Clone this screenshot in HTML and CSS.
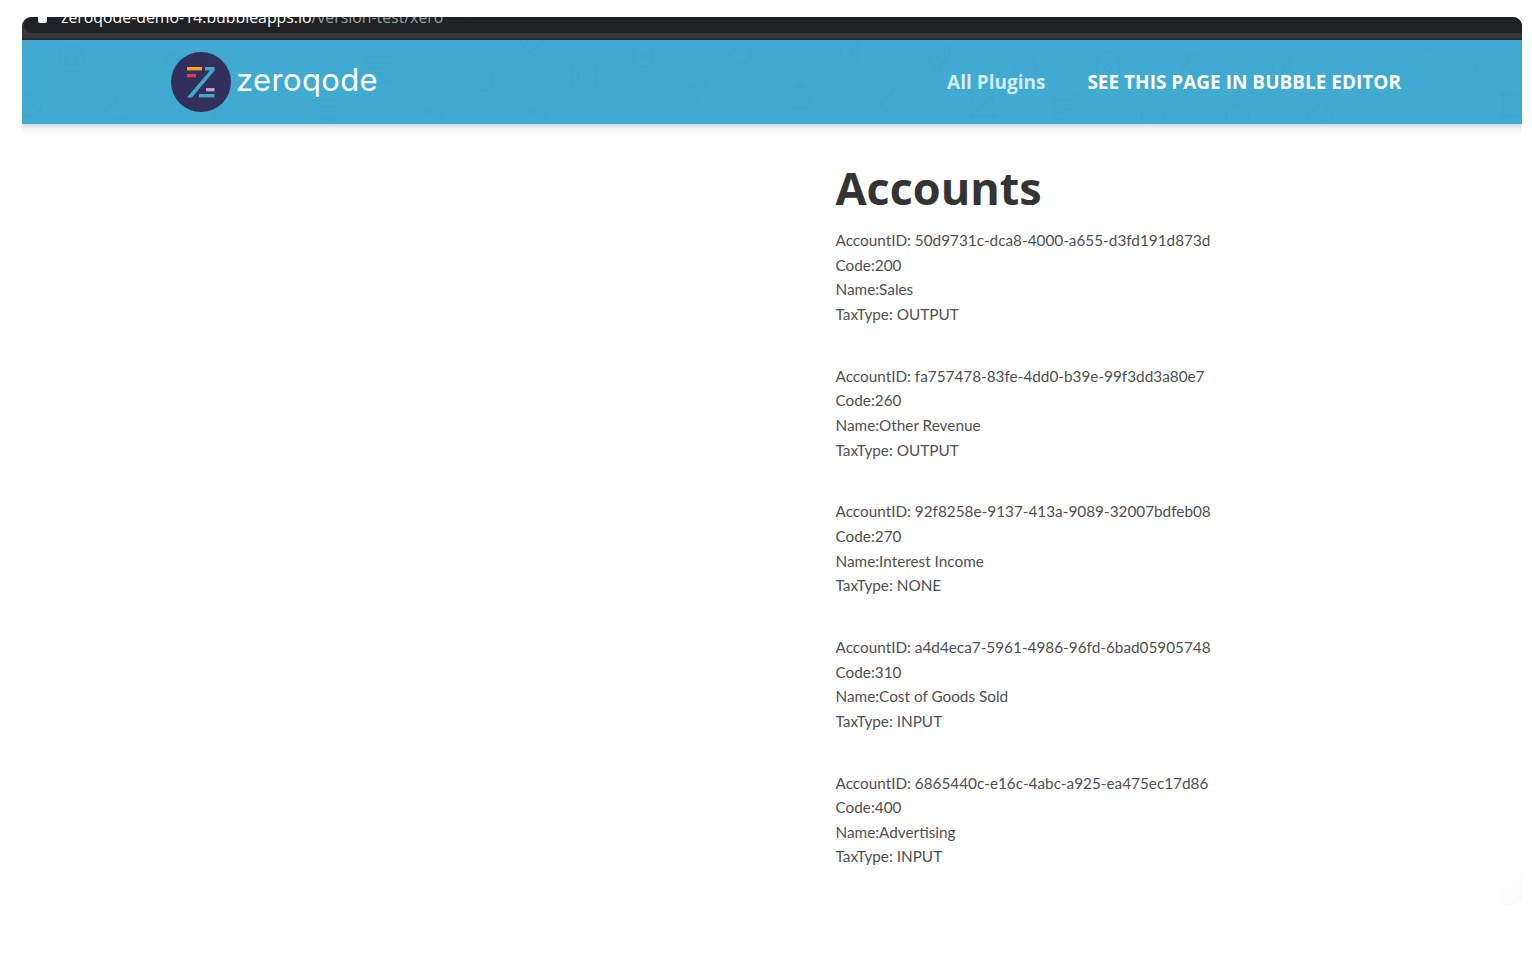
FILE: index.html
```html
<!DOCTYPE html>
<html lang="en">
<head>
  <meta charset="UTF-8" />
  <meta name="viewport" content="width=device-width, initial-scale=1.0"/>
  <title>Accounts - zeroqode</title>
  <link rel="stylesheet" href="styles.css">
</head>
<body>
  <div class="window">
    <div class="browser-bar">
      <div class="url-field">
        <span class="lock"></span>
        <span class="url">zeroqode-demo-14.bubbleapps.io<span class="url-path">/version-test/xero</span></span>
      </div>
    </div>

    <header class="header">
      <!-- faint icon wallpaper, coordinates are the header's own -->
      <svg class="pattern" width="1500" height="84" viewBox="0 0 1500 84" aria-hidden="true">
        <defs>
          <symbol id="i-insta" viewBox="0 0 26 26" overflow="visible">
            <rect x="1" y="1" width="24" height="24" rx="4"/><circle cx="13" cy="13" r="6"/><path d="M18 1v6h7"/>
          </symbol>
          <symbol id="i-watch" viewBox="0 0 30 28" overflow="visible">
            <circle cx="18" cy="16" r="11"/><circle cx="18" cy="16" r="2.5"/><path d="M15 2h6M18 2v3M1 10h6M0 16h5M1 22h6"/>
          </symbol>
          <symbol id="i-puzzle" viewBox="0 0 26 26" overflow="visible">
            <path d="M7 8h5c-2-2-2-7 3-7s5 5 3 7h6v16H7v-5c-2 2-6 2-6-3s4-5 6-3z"/>
          </symbol>
          <symbol id="i-rocket" viewBox="0 0 28 28" overflow="visible">
            <path d="M27 1c-8 0-14 4-17 9l-4 7 5 5 7-4c5-3 9-9 9-17z"/><circle cx="18" cy="10" r="4"/><path d="M7 10H3L1 14l5 3M18 21v4l-4 2-3-5"/>
          </symbol>
          <symbol id="i-thumb" viewBox="0 0 28 26" overflow="visible">
            <path d="M3 12c3-1 6-4 8-9 2-1 3 1 2 5h10c3 1 3 4 1 5 1 2 1 4-1 5 0 2-1 3-2 4H9c-4 0-7-2-7-6z"/><path d="M18 1l2 4M24 2l-2 4"/>
          </symbol>
          <symbol id="i-browser" viewBox="0 0 28 28" overflow="visible">
            <rect x="1" y="1" width="26" height="26" rx="2"/><path d="M1 7h26M4 12h20v5H4zM4 20h9M16 20h8v4h-8z"/>
          </symbol>
          <symbol id="i-resize" viewBox="0 0 28 28" overflow="visible">
            <path d="M3 3h24M3 3v22M3 25h24M5 23L25 5M25 5h-7M25 5v7"/><circle cx="3" cy="3" r="2"/><circle cx="3" cy="25" r="2"/><circle cx="27" cy="25" r="2"/>
          </symbol>
          <symbol id="i-bag" viewBox="0 0 26 28" overflow="visible">
            <path d="M9 7L6 1h14l-3 6M9 7h8c6 4 8 10 8 14s-3 6-6 6H7c-3 0-6-2-6-6s2-10 8-14z"/><circle cx="13" cy="17" r="3"/>
          </symbol>
          <symbol id="i-card" viewBox="0 0 24 34" overflow="visible">
            <rect x="1" y="1" width="22" height="32" rx="2"/><path d="M1 7h22"/><circle cx="12" cy="17" r="3"/><path d="M6 28c1-6 11-6 12 0"/>
          </symbol>
        </defs>
        <use href="#i-insta" x="36" y="6" width="26" height="26"/>
        <use href="#i-watch" x="-10" y="49" width="30" height="28"/>
        <use href="#i-puzzle" x="82" y="55" width="26" height="26"/>
        <use href="#i-rocket" x="131" y="11" width="28" height="28"/>
        <use href="#i-resize" x="190" y="50" width="28" height="28"/>
        <use href="#i-browser" x="292" y="59" width="28" height="28"/>
        <use href="#i-browser" x="342" y="16" width="28" height="28"/>
        <use href="#i-watch" x="442" y="24" width="30" height="28"/>
        <use href="#i-thumb" x="396" y="66" width="28" height="26"/>
        <use href="#i-thumb" x="499" y="66" width="28" height="26"/>
        <use href="#i-rocket" x="496" y="-10" width="28" height="28"/>
        <use href="#i-insta" x="549" y="23" width="26" height="26"/>
        <use href="#i-watch" x="603" y="0" width="30" height="28"/>
        <use href="#i-rocket" x="657" y="40" width="28" height="28"/>
        <use href="#i-thumb" x="704" y="1" width="28" height="26"/>
        <use href="#i-resize" x="707" y="83" width="28" height="28"/>
        <use href="#i-watch" x="760" y="42" width="30" height="28"/>
        <use href="#i-insta" x="811" y="-1" width="26" height="26"/>
        <use href="#i-puzzle" x="858" y="48" width="26" height="26"/>
        <use href="#i-rocket" x="901" y="6" width="28" height="28"/>
        <use href="#i-resize" x="946" y="51" width="28" height="28"/>
        <use href="#i-thumb" x="989" y="15" width="28" height="26"/>
        <use href="#i-browser" x="1031" y="53" width="28" height="28"/>
        <use href="#i-card" x="1074" y="11" width="24" height="34"/>
        <use href="#i-thumb" x="1117" y="60" width="28" height="26"/>
        <use href="#i-bag" x="1158" y="14" width="26" height="28"/>
        <use href="#i-thumb" x="1202" y="60" width="28" height="26"/>
        <use href="#i-insta" x="1243" y="15" width="26" height="26"/>
        <use href="#i-puzzle" x="1285" y="60" width="26" height="26"/>
        <use href="#i-rocket" x="1427" y="24" width="28" height="28"/>
        <use href="#i-resize" x="1478" y="51" width="28" height="28"/>
        <use href="#i-watch" x="1390" y="-18" width="30" height="28"/>
      </svg>

      <a class="logo" href="#">
        <svg class="logo-mark" width="60" height="60" viewBox="0 0 60 60">
          <circle cx="30" cy="30" r="30" fill="#332f5c"/>
          <rect x="16" y="15" width="15" height="3.4" fill="#f5a623"/>
          <rect x="16" y="22" width="9" height="3.4" fill="#e8345a"/>
          <path d="M34 15h9.500v3.400L21 45.500h-5L39 18.400h-5z" fill="#3fa9c9"/>
          <rect x="35" y="36" width="8.500" height="3.400" fill="#b7a3cf"/>
          <rect x="28" y="42" width="15.500" height="3.400" fill="#3fa9c9"/>
        </svg>
        <span class="logo-text">zeroqode</span>
      </a>

      <nav class="nav">
        <a class="nav-plugins" href="#">All Plugins</a>
        <a class="nav-editor" href="#">SEE THIS PAGE IN BUBBLE EDITOR</a>
      </nav>
    </header>

    <main class="content">
      <h1>Accounts</h1>

      <div class="account">
        <div>AccountID: 50d9731c-dca8-4000-a655-d3fd191d873d</div>
        <div>Code:200</div>
        <div>Name:Sales</div>
        <div>TaxType: OUTPUT</div>
      </div>
      <div class="account">
        <div>AccountID: fa757478-83fe-4dd0-b39e-99f3dd3a80e7</div>
        <div>Code:260</div>
        <div>Name:Other Revenue</div>
        <div>TaxType: OUTPUT</div>
      </div>
      <div class="account">
        <div>AccountID: 92f8258e-9137-413a-9089-32007bdfeb08</div>
        <div>Code:270</div>
        <div>Name:Interest Income</div>
        <div>TaxType: NONE</div>
      </div>
      <div class="account">
        <div>AccountID: a4d4eca7-5961-4986-96fd-6bad05905748</div>
        <div>Code:310</div>
        <div>Name:Cost of Goods Sold</div>
        <div>TaxType: INPUT</div>
      </div>
      <div class="account">
        <div>AccountID: 6865440c-e16c-4abc-a925-ea475ec17d86</div>
        <div>Code:400</div>
        <div>Name:Advertising</div>
        <div>TaxType: INPUT</div>
      </div>
    </main>
  </div>
  <div class="corner-fade"></div>
</body>
</html>
```

FILE: styles.css
```css
html, body { height: 100%; }
body {
  margin: 0; background: #fff; overflow: hidden;
  font-family: 'Lato', sans-serif; color: #505050;
}
a { text-decoration: none; color: inherit; }

.window { margin: 17px 10px 0 22px; }

.browser-bar {
  height: 23px; background: #35363a;
  border-radius: 9px 9px 0 0; overflow: hidden;
  border-bottom: 2px solid #2a2b2e; box-sizing: border-box;
}
.url-field {
  height: 16px; background: #202124; margin-left: 2px;
  border-radius: 9px 9px 0 9px; overflow: hidden;
  display: flex; align-items: flex-end; position: relative;
}
.lock {
  width: 9px; height: 12px; background: #f1f3f4; border-radius: 2px;
  margin: 0 14px 10px 14px; flex: none;
}
.url {
  font-family: 'Open Sans', sans-serif; font-size: 15.85px; line-height: 20px;
  color: #fff; white-space: nowrap; margin-bottom: 6px;
}
.url-path { color: #9aa0a6; }

.header {
  height: 84px; background: #40aad0; position: relative;
  display: flex; align-items: center; padding: 0 121px 0 149px;
}
/* soft shadow under the bar, only below it */
.header::after {
  content: ""; position: absolute; left: 0; right: 0; top: 100%; height: 11px;
  background: linear-gradient(#dadada, #f4f4f4 45%, #fff);
}
.pattern {
  position: absolute; left: 0; top: 0;
  fill: none; stroke: #3da6cc; stroke-width: 1;
}
.logo { display: flex; align-items: center; gap: 6px; position: relative; margin-top: -1px; }
.logo-text {
  font-family: 'Inter', sans-serif; font-size: 31px; color: #fff;
  letter-spacing: 0.35px; margin-top: -4px; margin-left: -1px;
}
.nav {
  margin-left: auto; position: relative; display: flex; gap: 42px;
  font-family: 'Open Sans', sans-serif; font-weight: 700; font-size: 19px;
}
.nav-plugins { color: #d3ecf7; }
.nav-editor { color: #fff; }

.content { padding: 33px 0 0 813.5px; }
h1 {
  margin: 0 0 9px; font-family: 'Open Sans', sans-serif; font-weight: 700;
  font-size: 45px; line-height: 62px; color: #333;
}
.account { font-size: 15.32px; line-height: 24.65px; margin-bottom: 37px; }

.corner-fade {
  position: absolute; left: 1500px; top: 860px; width: 22px; height: 45px;
  background: linear-gradient(135deg, #fff 40%, #f8f8f8); border-radius: 0 0 10px 0;
}
```
